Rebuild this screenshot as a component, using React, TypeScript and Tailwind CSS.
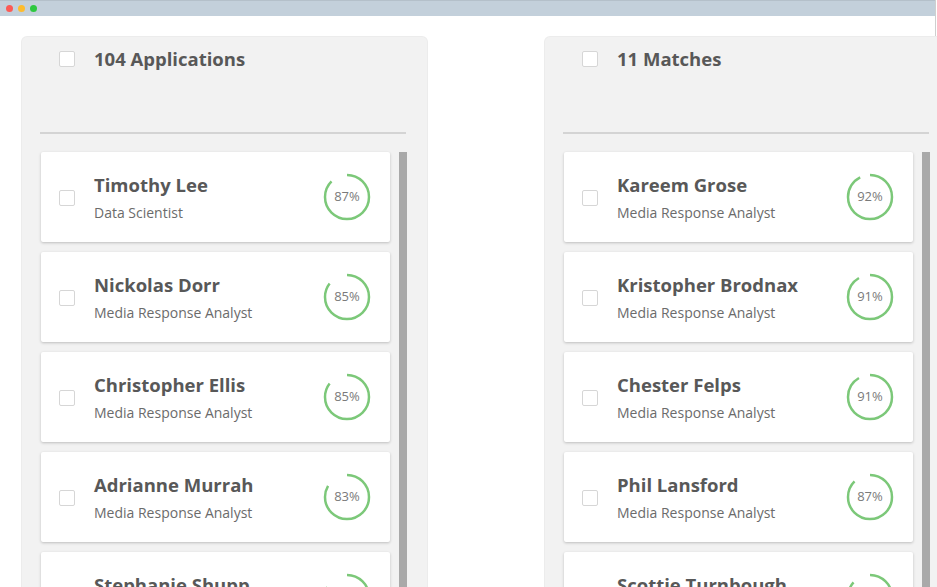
import React from "react";

type Person = { name: string; role: string; score: number };

const applications: Person[] = [
  { name: "Timothy Lee", role: "Data Scientist", score: 87 },
  { name: "Nickolas Dorr", role: "Media Response Analyst", score: 85 },
  { name: "Christopher Ellis", role: "Media Response Analyst", score: 85 },
  { name: "Adrianne Murrah", role: "Media Response Analyst", score: 83 },
  { name: "Stephanie Shupp", role: "Media Response Analyst", score: 82 },
];

const matches: Person[] = [
  { name: "Kareem Grose", role: "Media Response Analyst", score: 92 },
  { name: "Kristopher Brodnax", role: "Media Response Analyst", score: 91 },
  { name: "Chester Felps", role: "Media Response Analyst", score: 91 },
  { name: "Phil Lansford", role: "Media Response Analyst", score: 87 },
  { name: "Scottie Turnbough", role: "Media Response Analyst", score: 86 },
];

function Checkbox() {
  return <div className="w-4 h-4 shrink-0 bg-white border border-[#d6d6d6] rounded-[2px]" />;
}

function Score({ value }: { value: number }) {
  const r = 22;
  const c = 2 * Math.PI * r;
  return (
    <div className="relative w-[48px] h-[48px] shrink-0">
      <svg width="48" height="48" viewBox="0 0 48 48" className="-rotate-90">
        <circle
          cx="24"
          cy="24"
          r={r}
          fill="none"
          stroke="#7cc879"
          strokeWidth="2.5"
          strokeDasharray={`${(c * value) / 100} ${c}`}
        />
      </svg>
      <span className="absolute inset-0 flex items-center justify-center text-[13px] text-[#7a7a7a]">
        {value}%
      </span>
    </div>
  );
}

function Card({ p }: { p: Person }) {
  return (
    <div className="h-[90px] bg-white rounded-[2px] shadow-[0_1px_3px_rgba(0,0,0,0.22)] flex items-center pl-[18px] pr-[19px]">
      <div className="mt-[2px]">
        <Checkbox />
      </div>
      <div className="flex-1 ml-[19px] pt-[1px]">
        <div className="text-[18.5px] leading-6 font-bold text-[#585858]">{p.name}</div>
        <div className="text-[14px] leading-[18px] text-[#6b6b6b] mt-[7px]">{p.role}</div>
      </div>
      <Score value={p.score} />
    </div>
  );
}

function Panel({ title, people }: { title: string; people: Person[] }) {
  return (
    <div className="w-[405px] h-[620px] shrink-0 bg-[#f2f2f2] rounded-t-[5px] shadow-[0_0_0_1px_#ececec]">
      <div className="flex items-center pl-[37px] pt-[8px]">
        <Checkbox />
        <span className="ml-[19px] text-[18.5px] font-bold text-[#585858]">{title}</span>
      </div>
      <div className="ml-[18px] mr-[21px] mt-[59px] h-[2px] bg-[#d4d4d4]" />
      <div className="flex mt-[18px] pl-[19px]">
        <div className="w-[349px] flex flex-col gap-[10px]">
          {people.map((p) => (
            <Card key={p.name} p={p} />
          ))}
        </div>
        <div className="ml-[9px] w-[8px] h-[460px] bg-[#a9a9a9]" />
      </div>
    </div>
  );
}

export default function App() {
  return (
    <div className="w-[937px] h-[587px] overflow-hidden bg-white" style={{ fontFamily: '"Open Sans", sans-serif' }}>
      <div className="w-[936px] h-full border-r border-[#cfcfcf] flex flex-col">
        <div className="h-4 shrink-0 bg-[#c3d0db] border-t border-[#b4c0ca] flex items-center gap-[5px] pl-[6px]">
          <span className="w-[7px] h-[7px] rounded-full bg-[#fc5a55]" />
          <span className="w-[7px] h-[7px] rounded-full bg-[#fdbc2e]" />
          <span className="w-[7px] h-[7px] rounded-full bg-[#2dc840]" />
        </div>
        <div className="flex gap-[118px] pl-[22px] pt-[21px]">
          <Panel title="104 Applications" people={applications} />
          <Panel title="11 Matches" people={matches} />
        </div>
      </div>
    </div>
  );
}
